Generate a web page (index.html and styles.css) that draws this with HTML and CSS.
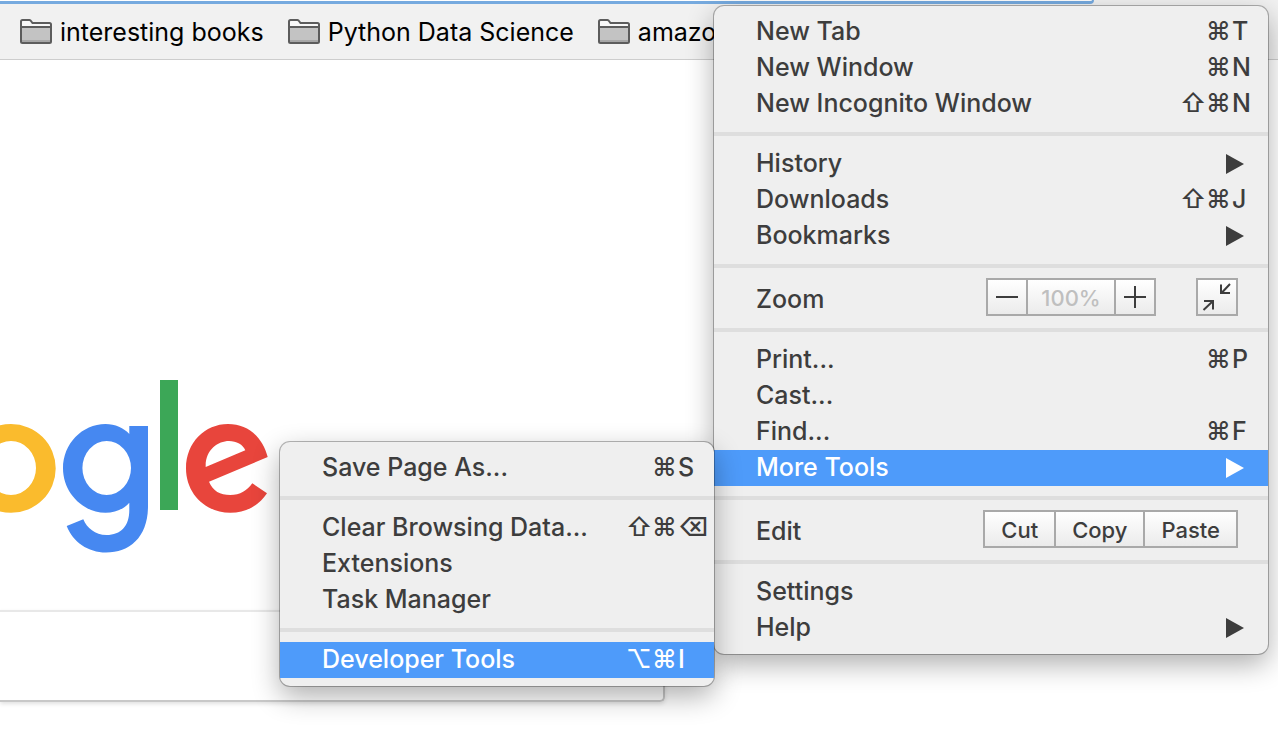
FILE: index.html
```
<!DOCTYPE html>
<html lang="en">
<head>
<meta charset="utf-8">
<title>Google</title>
<link rel="stylesheet" href="styles.css">
</head>
<body>
<svg class="defs" aria-hidden="true">
  <symbol id="folder" viewBox="0 0 32 26">
    <path d="M1 24V2.500Q1 1 2.500 1H9.500Q10.500 1 11 2L12.500 4H29.500Q31 4 31 5.500V24Z" fill="#f7f7f7"/>
    <path d="M1 8H31V24H1Z" fill="#c3c3c3"/>
    <path d="M2 21H30V23H2Z" fill="#a6a6a6"/>
    <path d="M1 8H31M1 22.500V2.500Q1 1 2.500 1H9.500Q10.500 1 11 2L12.500 4H29.500Q31 4 31 5.500V22.500Q31 24 29.500 24H2.500Q1 24 1 22.500Z" fill="none" stroke="#5c5c5c" stroke-width="2"/>
  </symbol>
  <symbol id="arrow" viewBox="0 0 18 20"><path d="M0 0L18 10L0 20Z" fill="currentColor"/></symbol>
</svg>

<header class="toolbar">
  <div class="omnibox-edge"></div>
  <nav class="bookmarks" aria-label="Bookmarks">
    <a class="bookmark" href="#"><svg class="folder"><use href="#folder"/></svg>interesting books</a>
    <a class="bookmark" href="#"><svg class="folder"><use href="#folder"/></svg>Python Data Science</a>
    <a class="bookmark" href="#"><svg class="folder"><use href="#folder"/></svg>amazon</a>
  </nav>
</header>

<main class="page">
  <svg class="logo" viewBox="0 376 272 180" role="img" aria-label="Google">
    <path fill="#fabb2d" fill-rule="evenodd" d="M11 424A44.700 44.400 0 0 1 11 512.800A44.700 44.400 0 0 1 11 424ZM11 441A25 27 0 0 0 11 495A25 27 0 0 0 11 441Z"/>
    <path fill="#4688f1" fill-rule="evenodd" d="M63 468.300C63 444 82 424 105.500 424C115 424 124 428 129.300 434V426H148V506C148 537 130 552.500 106 552.500C88 552.500 73 542 66.700 526L83.300 519.300C87 528 95 535 106.500 535C121 535 129.300 526 129.300 510V502.700C124 509 115 512.700 105.500 512.700C82 512.700 63 492 63 468.300ZM106.700 441A24.300 27 0 0 0 106.700 495A24.300 27 0 0 0 106.700 441Z"/>
    <path fill="#3ca757" d="M160 380H178V510H160Z"/>
    <path fill="#e8453c" fill-rule="evenodd" d="M267.700 457L209 481.700C213 491 220 495 230.300 495C240 495 247.500 490.500 252.300 483.300L267 493.300C259 505 247 512.700 230.300 512.700C205 512.700 186 493.500 186 468.300C186 442.500 205 424 228 424C248 424 262.500 437 267.700 457ZM205.700 467L245.300 450.300C243 444.500 236.500 441 229 441C218 441 205 450 205.700 467Z"/>
  </svg>
  <section class="panel"></section>
</main>

<div class="menu main-menu" role="menu" aria-label="Chrome menu">
  <button class="item" role="menuitem">New Tab<kbd class="keys"><span>⌘</span><span class="key">T</span></kbd></button>
  <button class="item" role="menuitem">New Window<kbd class="keys"><span>⌘</span><span class="key">N</span></kbd></button>
  <button class="item" role="menuitem">New Incognito Window<kbd class="keys"><span>⇧</span><span>⌘</span><span class="key">N</span></kbd></button>
  <hr class="separator">
  <button class="item" role="menuitem">History<svg class="arrow"><use href="#arrow"/></svg></button>
  <button class="item" role="menuitem">Downloads<kbd class="keys"><span>⇧</span><span>⌘</span><span class="key">J</span></kbd></button>
  <button class="item" role="menuitem">Bookmarks<svg class="arrow"><use href="#arrow"/></svg></button>
  <hr class="separator">
  <div class="control-row">
    <span class="control-label">Zoom</span>
    <div class="group">
      <button class="cell zoom-out" aria-label="Zoom out"><svg class="sign" viewBox="0 0 22 22"><path d="M0 11H22"/></svg></button>
      <output class="cell level">100%</output>
      <button class="cell zoom-in" aria-label="Zoom in"><svg class="sign" viewBox="0 0 22 22"><path d="M0 11H22M11 0V22"/></svg></button>
    </div>
    <div class="group fullscreen">
      <button class="cell" aria-label="Full screen"><svg class="shrink" viewBox="0 0 38 34"><path d="M32 4L24 12.500M23 4.500V13H32M5.500 30L14.500 21.500M6 21H15V29.500"/></svg></button>
    </div>
  </div>
  <hr class="separator">
  <button class="item" role="menuitem">Print...<kbd class="keys"><span>⌘</span><span class="key">P</span></kbd></button>
  <button class="item" role="menuitem">Cast...</button>
  <button class="item" role="menuitem">Find...<kbd class="keys"><span>⌘</span><span class="key">F</span></kbd></button>
  <div class="branch">
    <button class="item selected" role="menuitem" aria-expanded="true">More Tools<svg class="arrow"><use href="#arrow"/></svg></button>
    <div class="menu submenu" role="menu" aria-label="More Tools">
      <button class="item" role="menuitem">Save Page As...<kbd class="keys"><span>⌘</span><span class="key">S</span></kbd></button>
      <hr class="separator">
      <button class="item" role="menuitem">Clear Browsing Data...<kbd class="keys"><span>⇧</span><span>⌘</span><span class="key">⌫</span></kbd></button>
      <button class="item" role="menuitem">Extensions</button>
      <button class="item" role="menuitem">Task Manager</button>
      <hr class="separator">
      <button class="item selected" role="menuitem">Developer Tools<kbd class="keys"><span>⌥</span><span>⌘</span><span class="key">I</span></kbd></button>
    </div>
  </div>
  <hr class="separator">
  <div class="control-row">
    <span class="control-label">Edit</span>
    <div class="group">
      <button class="cell word">Cut</button>
      <button class="cell word">Copy</button>
      <button class="cell word">Paste</button>
    </div>
  </div>
  <hr class="separator">
  <button class="item" role="menuitem">Settings</button>
  <button class="item" role="menuitem">Help<svg class="arrow"><use href="#arrow"/></svg></button>
</div>
</body>
</html>
```
FILE: styles.css
```
* {
  box-sizing: border-box;
}

body {
  margin: 0;
  position: relative;
  min-height: 100vh;
  overflow: hidden;
  background: #fff;
  color: #3d3d3d;
  font-family: Inter, "Noto Sans", sans-serif;
  font-size: 25px;
}

button {
  margin: 0;
  border: 0;
  padding: 0;
  background: none;
  color: inherit;
  font: inherit;
}

.defs {
  display: none;
}

.toolbar {
  background: #f1f1f1;
  border-bottom: 1px solid #cdcdcd;
}

.omnibox-edge {
  width: 85.6%;
  height: 4px;
  background: #fff;
  border-bottom: 3px solid #76aadf;
  border-right: 2px solid #76aadf;
  border-bottom-right-radius: 4px;
}

.bookmarks {
  display: flex;
  gap: 24px;
  height: 55px;
  padding-left: 20px;
  align-items: center;
  white-space: nowrap;
}

.bookmark {
  display: flex;
  gap: 8px;
  align-items: center;
  color: #000;
  line-height: 30px;
  text-decoration: none;
}

.folder {
  width: 32px;
  height: 26px;
}

.page {
  padding-top: 316px;
}

.logo {
  display: block;
  width: 272px;
  height: 180px;
}

.panel {
  width: 52%;
  height: 92px;
  margin-top: 54px;
  border: solid #c8c8c8;
  border-width: 2px 2px 2px 0;
  border-top-color: #e8e8e8;
  border-bottom-right-radius: 5px;
  box-shadow: 0 2px 4px rgba(0, 0, 0, 0.12);
}

.menu {
  position: absolute;
  padding: 8px 0;
  background: #efefef;
  border-radius: 10px;
  box-shadow: 0 0 0 1px rgba(0, 0, 0, 0.28), 0 10px 28px rgba(0, 0, 0, 0.32);
  font-weight: 450;
}

.main-menu {
  top: 6px;
  right: 10px;
  width: 554px;
}

.branch {
  position: relative;
}

.submenu {
  top: -8px;
  right: 100%;
  width: 434px;
}

.item {
  display: flex;
  width: 100%;
  height: 36px;
  padding-left: 42px;
  justify-content: space-between;
  text-align: left;
  line-height: 34px;
  white-space: nowrap;
}

.selected {
  background: #4e9bfa;
  color: #fff;
}

.keys {
  display: flex;
  font: inherit;
}

.keys span {
  width: 26px;
}

.keys .key {
  width: 36px;
}

.arrow {
  width: 18px;
  height: 20px;
  margin: 8px 24px 8px 0;
}

.separator {
  height: 4px;
  margin: 10px 0;
  border: 0;
  background: #dedede;
}

.control-row {
  display: flex;
  height: 40px;
  padding: 0 30px 0 42px;
  align-items: flex-start;
}

.control-label {
  margin-right: auto;
  line-height: 42px;
}

.group {
  display: flex;
  height: 38px;
  border: 2px solid #a9a9a9;
  background: linear-gradient(#fff, #ebebeb);
}

.fullscreen {
  margin-left: 40px;
}

.cell {
  display: flex;
  align-items: center;
  justify-content: center;
  font-size: 22px;
  line-height: 34px;
}

.cell + .cell {
  border-left: 2px solid #a9a9a9;
}

.zoom-out {
  width: 38px;
}

.zoom-in {
  width: 40px;
}

.level {
  width: 88px;
  padding-top: 2px;
  color: #bfbfbf;
}

.word {
  padding: 2px 16px 0;
}

.sign {
  width: 22px;
  height: 22px;
}

.shrink {
  width: 38px;
  height: 34px;
}

.sign,
.shrink {
  fill: none;
  stroke: #3d3d3d;
  stroke-width: 2;
}
```
